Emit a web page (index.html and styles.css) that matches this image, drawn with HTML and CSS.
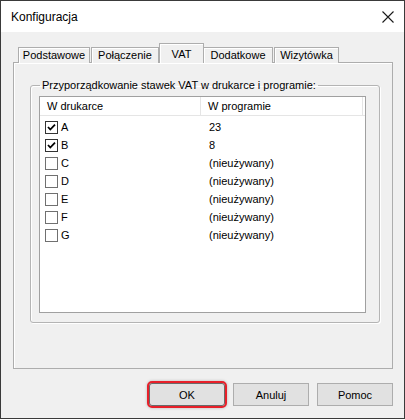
FILE: index.html
```html
<!DOCTYPE html>
<html lang="pl">
<head>
    <meta charset="UTF-8">
    <meta name="viewport" content="width=device-width, initial-scale=1.0">
    <title>Konfiguracja</title>
    <link rel="stylesheet" href="styles.css">
</head>
<body>
    <div class="window">
        <div class="titlebar">
            <span class="title">Konfiguracja</span>
            <svg class="close" width="12" height="12" viewBox="0 0 12 12">
                <path d="M0.5 0.5 L11.5 11.5 M11.5 0.5 L0.5 11.5" stroke="#1a1a1a" stroke-width="1.1" fill="none"/>
            </svg>
        </div>

        <div class="client">
            <ul class="tabs">
                <li class="tab tab-basic">Podstawowe</li>
                <li class="tab tab-link">Połączenie</li>
                <li class="tab tab-vat active">VAT</li>
                <li class="tab tab-extra">Dodatkowe</li>
                <li class="tab tab-card">Wizytówka</li>
            </ul>

            <div class="panel">
                <fieldset class="group">
                    <legend>Przyporządkowanie stawek VAT w drukarce i programie:</legend>
                    <div class="list">
                        <div class="list-head">
                            <div class="col col-printer">W drukarce</div>
                            <div class="col col-program">W programie</div>
                        </div>
                        <div class="list-body">
                            <div class="row">
                                <div class="col col-printer">
                                    <span class="check"><svg width="11" height="11" viewBox="0 0 11 11"><path d="M2 5 L4.3 7.5 L9 2.6" stroke="#000" stroke-width="1.8" fill="none"/></svg></span>A
                                </div>
                                <div class="col col-program">23</div>
                            </div>
                            <div class="row">
                                <div class="col col-printer">
                                    <span class="check"><svg width="11" height="11" viewBox="0 0 11 11"><path d="M2 5 L4.3 7.5 L9 2.6" stroke="#000" stroke-width="1.8" fill="none"/></svg></span>B
                                </div>
                                <div class="col col-program">8</div>
                            </div>
                            <div class="row">
                                <div class="col col-printer"><span class="check"></span>C</div>
                                <div class="col col-program">(nieużywany)</div>
                            </div>
                            <div class="row">
                                <div class="col col-printer"><span class="check"></span>D</div>
                                <div class="col col-program">(nieużywany)</div>
                            </div>
                            <div class="row">
                                <div class="col col-printer"><span class="check"></span>E</div>
                                <div class="col col-program">(nieużywany)</div>
                            </div>
                            <div class="row">
                                <div class="col col-printer"><span class="check"></span>F</div>
                                <div class="col col-program">(nieużywany)</div>
                            </div>
                            <div class="row">
                                <div class="col col-printer"><span class="check"></span>G</div>
                                <div class="col col-program">(nieużywany)</div>
                            </div>
                        </div>
                    </div>
                </fieldset>
            </div>

            <div class="buttons">
                <button class="btn btn-default">OK</button>
                <button class="btn">Anuluj</button>
                <button class="btn">Pomoc</button>
            </div>
        </div>
    </div>
</body>
</html>
```

FILE: styles.css
```css
html, body {
    margin: 0;
    padding: 0;
    background: #ffffff;
    font-family: 'Liberation Sans', Arial, sans-serif;
    font-size: 11px;
    color: #000;
}

.window {
    width: 405px;
    height: 419px;
    box-sizing: border-box;
    border: 1px solid #3a3a3a;
    display: flex;
    flex-direction: column;
}

.titlebar {
    height: 31px;
    background: #ffffff;
    display: flex;
    align-items: center;
    justify-content: space-between;
    padding: 1px 10px 0 10px;
    box-sizing: border-box;
}

.title {
    font-size: 12px;
}

.client {
    flex: 1;
    background: #f0f0f0;
    padding: 12px 11px 0 12px;
}

/* tab strip */
.tabs {
    list-style: none;
    margin: 0;
    padding: 0 0 0 5px;
    display: flex;
    align-items: flex-end;
    height: 19px;
    position: relative;
    z-index: 1;
    margin-bottom: -1px;
}

.tab {
    height: 15px;
    line-height: 14px;
    box-sizing: content-box;
    text-align: center;
    border: 1px solid #adadad;
    border-bottom: none;
    box-shadow: inset 1px 1px 0 #ffffff;
    background: #f0f0f0;
    margin-right: 1px;
    white-space: nowrap;
}

.tab-basic { width: 70px; }
.tab-link  { width: 66px; }
.tab-vat   { width: 43px; }
.tab-extra { width: 68px; }
.tab-card  { width: 63px; }

.tab.active {
    height: 16px;
    padding-top: 3px;
    margin: 0 -1px 0 -1px;
    position: relative;
    z-index: 2;
}

/* tab page */
.panel {
    height: 307px;
    box-sizing: border-box;
    border: 1px solid #adadad;
    box-shadow: inset 1px 1px 0 #ffffff;
    padding: 16px 12px 0 16px;
}

.group {
    margin: 0;
    padding: 4px 13px 9px 8px;
    border: 1px solid #b4b4b4;
    border-radius: 3px;
    box-shadow: 1px 1px 0 #ffffff, inset 1px 1px 0 #ffffff;
}

.group legend {
    margin-left: 1px;
    padding: 0 2px;
    line-height: 13px;
}

/* list view */
.list {
    height: 217px;
    box-sizing: border-box;
    border: 1px solid #a0a0a0;
    background: #ffffff;
}

.list-head {
    display: flex;
    height: 18px;
    line-height: 18px;
    border-bottom: 1px solid #e5e5e5;
}

.list-head .col {
    border-right: 1px solid #e5e5e5;
}

.col-printer {
    width: 161px;
    padding-left: 7px;
    box-sizing: border-box;
    display: flex;
    align-items: center;
}

.col-program {
    width: 162px;
    padding-left: 7px;
    box-sizing: border-box;
}

.list-body {
    padding-top: 2px;
}

.row {
    display: flex;
    height: 18px;
    line-height: 18px;
}

.row .col-printer {
    padding-left: 5px;
}

.row .col-program {
    padding-left: 8px;
}

.check {
    width: 13px;
    height: 13px;
    box-sizing: border-box;
    border: 1px solid #707070;
    background: #ffffff;
    margin-right: 3px;
    flex: none;
    display: flex;
}

.check:has(svg) {
    border-color: #333333;
}

/* dialog buttons */
.buttons {
    display: flex;
    justify-content: flex-end;
    gap: 8px;
    margin-top: 14px;
}

.btn {
    width: 76px;
    height: 23px;
    font-family: 'Liberation Sans', Arial, sans-serif;
    font-size: 11px;
    color: #000;
    background: #e1e1e1;
    border: 1px solid #adadad;
    padding: 0;
}

.btn-default {
    border-color: #6a6a6a;
    outline: 2px solid #e8202a;
    outline-offset: 0;
    border-radius: 3px;
    box-shadow: 0 0 3px 2px rgba(0, 0, 0, 0.25);
}
```
